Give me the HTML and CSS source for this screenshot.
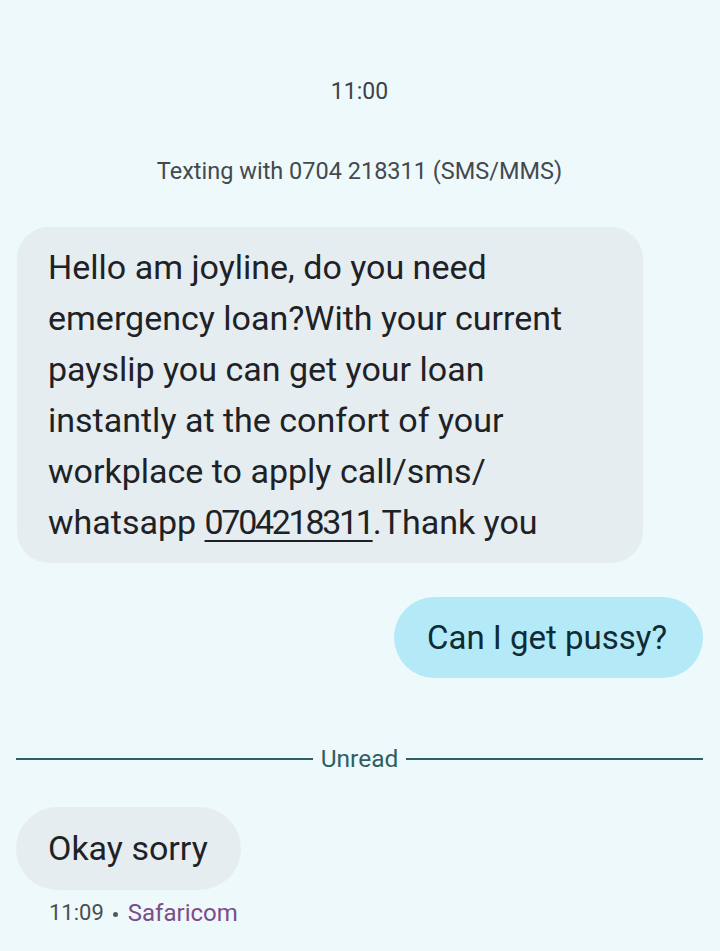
FILE: index.html
```html
<!DOCTYPE html>
<html lang="en">
<head>
<meta charset="utf-8">
<title>Messages</title>
<link rel="stylesheet" href="styles.css">
</head>
<body>
<main class="thread">
  <div class="stamp">11:00</div>
  <div class="info">Texting with 0704 218311 (SMS/MMS)</div>

  <div class="msg incoming big">
    Hello am joyline, do you need<br>
    emergency loan?With your current<br>
    payslip you can get your loan<br>
    instantly at the confort of your<br>
    workplace to apply call/sms/<br>
    whatsapp <span class="link">0704218311</span>.Thank you
  </div>

  <div class="row-out">
    <div class="msg outgoing">Can I get pussy?</div>
  </div>

  <div class="divider">
    <span class="rule"></span>
    <span class="label">Unread</span>
    <span class="rule"></span>
  </div>

  <div class="msg incoming small">Okay sorry</div>
  <div class="meta"><span class="time">11:09</span><span class="dot"></span><span class="carrier">Safaricom</span></div>
</main>
</body>
</html>
```
FILE: styles.css
```css
html, body {
  margin: 0;
  padding: 0;
  background: #eef9fc;
}

body {
  font-family: "Roboto", "Noto Sans", sans-serif;
  color: #1e2226;
}

.thread {
  display: flex;
  flex-direction: column;
  padding: 77px 17px 0 16px;
}

.stamp {
  text-align: center;
  font-size: 23px;
  line-height: 30px;
  color: #3d4246;
}

.info {
  margin-top: 49px;
  text-align: center;
  font-size: 23.5px;
  line-height: 30px;
  color: #44494e;
}

.msg {
  box-sizing: border-box;
}

.incoming {
  align-self: flex-start;
  background: #e5edf0;
  color: #1e2226;
}

.big {
  margin-top: 41px;
  margin-left: 1px;
  width: 626px;
  padding: 15px 20px 15px 31px;
  border-radius: 32px;
  font-size: 34px;
  line-height: 51px;
}

.link {
  letter-spacing: -2.3px;
  text-decoration: underline;
  text-decoration-thickness: 2px;
  text-underline-offset: 6px;
}

.row-out {
  display: flex;
  justify-content: flex-end;
  margin-top: 34px;
}

.outgoing {
  background: #b4eaf7;
  color: #0f2c36;
  height: 81px;
  padding: 0 36px 0 33px;
  border-radius: 41px;
  font-size: 33px;
  line-height: 81px;
}

.divider {
  margin-top: 66px;
  display: flex;
  align-items: center;
  gap: 8px;
  height: 30px;
}

.rule {
  flex: 1;
  height: 2px;
  background: #2f5f63;
}

.label {
  font-size: 24.5px;
  line-height: 30px;
  color: #2f5f63;
}

.small {
  margin-top: 33px;
  height: 83px;
  padding: 0 33px 0 32px;
  border-radius: 42px;
  font-size: 34px;
  line-height: 83px;
}

.meta {
  margin-top: 10px;
  padding-left: 33px;
  font-size: 22px;
  line-height: 26px;
  color: #4a4e52;
  display: flex;
  align-items: center;
}

.dot {
  width: 5px;
  height: 5px;
  border-radius: 50%;
  background: #55595d;
  margin: 2px 10px 0 9px;
}

.carrier {
  font-size: 24px;
  color: #7c4d88;
}
```
